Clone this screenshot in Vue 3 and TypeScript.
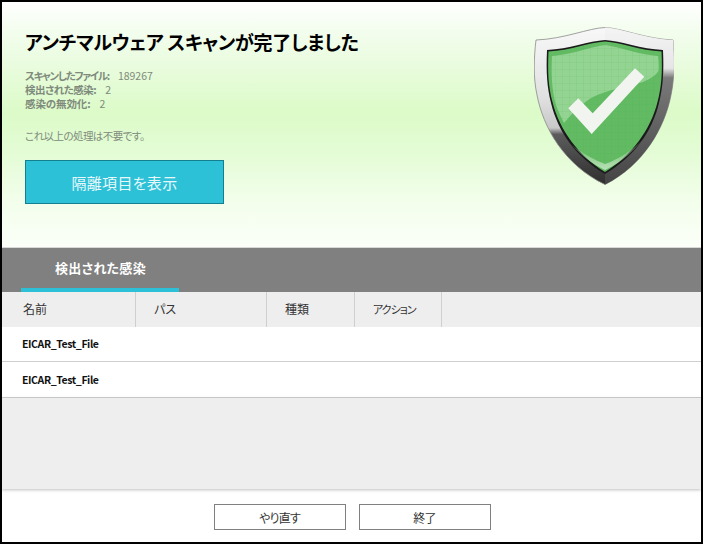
<script setup lang="ts">
const stats = [
  { label: 'スキャンしたファイル:', value: '189267' },
  { label: '検出された感染:', value: '2' },
  { label: '感染の無効化:', value: '2' },
]
const columns = [
  { name: '名前', cls: 'c1' },
  { name: 'パス', cls: 'c2' },
  { name: '種類', cls: 'c3' },
  { name: 'アクション', cls: 'c4' },
]
const rows = ['EICAR_Test_File', 'EICAR_Test_File']
</script>

<template>
  <div class="window">
    <header class="hero">
      <div class="summary">
        <h1 class="title">アンチマルウェア スキャンが完了しました</h1>
        <div class="stats">
          <div v-for="s in stats" :key="s.label" class="stat">
            <span class="stat-label">{{ s.label }}</span>
            <span>{{ s.value }}</span>
          </div>
        </div>
        <p class="note">これ以上の処理は不要です。</p>
        <button class="primary">隔離項目を表示</button>
      </div>
      <svg class="shield" viewBox="0 0 140 158" width="140" height="158">
        <defs>
          <linearGradient id="rim" x1="0" y1="0" x2="0" y2="1">
            <stop offset="0" stop-color="#f8f8f8" />
            <stop offset="0.45" stop-color="#e0e0e0" />
            <stop offset="0.64" stop-color="#c8c8c8" />
            <stop offset="0.68" stop-color="#5c5c5c" />
            <stop offset="1" stop-color="#2e2e2e" />
          </linearGradient>
          <linearGradient id="rimRight" x1="0" y1="0" x2="0" y2="1">
            <stop offset="0" stop-color="#f4f4f4" />
            <stop offset="0.26" stop-color="#e6e6e6" />
            <stop offset="0.32" stop-color="#7a7a7a" />
            <stop offset="1" stop-color="#444" />
          </linearGradient>
          <linearGradient id="lowerGlass" x1="0" y1="0" x2="0" y2="1">
            <stop offset="0" stop-color="#b9e2b6" stop-opacity="0" />
            <stop offset="1" stop-color="#c8e8c8" stop-opacity="0.85" />
          </linearGradient>
          <pattern id="grid" width="7" height="7" patternUnits="userSpaceOnUse">
            <path d="M7 0H0V7" fill="none" stroke="#3f9a4a" stroke-opacity="0.16" stroke-width="1" />
          </pattern>
          <clipPath id="rightHalf"><rect x="71" y="0" width="70" height="158" /></clipPath>
        </defs>
        <path d="M71 0.5C55 1 30 12 2 13C0 30 -1 50 3 68C9 100 30 138 71 157.5C110 138 131 100 137 68C141 50 140 30 139 13C112 12 87 1 71 0.5Z" fill="url(#rim)" stroke="#8a8a8a" stroke-width="0.8" />
        <path d="M71 0.5C87 1 112 12 139 13C140 30 141 50 137 68C131 100 110 138 71 157.5Z" fill="url(#rimRight)" clip-path="url(#rightHalf)" />
        <path d="M71 13C55 14 35 22 13 23C12 45 13 60 17 76C24 105 42 130 71 147C100 130 118 105 125 76C129 60 130 45 129 23C107 22 87 14 71 13Z" fill="#1b1b1b" />
        <path d="M71 14.5C55 15.5 36 23.5 14.5 24.5C13.5 46 14.5 60 18.5 75C25.5 103 44 128 71 145C98 128 116.500 103 123.500 75C127.500 60 128.500 46 127.500 24.500C106 23.500 87 15.500 71 14.500Z" fill="#62bb62" />
        <path d="M71 18C56 20 40 27 18 29C17 48 18 64 22 78C24 84 27 90 30 96C40 84 50 75 59 70C75 62 95 60 109 55C116 52 121 49 124.500 44C125 38 124.500 33 124 29C102 27 86 20 71 18Z" fill="#93d492" />
        <path d="M71 14.5C55 15.5 36 23.5 14.5 24.5C13.5 46 14.5 60 18.5 75C25.5 103 44 128 71 145C98 128 116.500 103 123.500 75C127.500 60 128.500 46 127.500 24.500C106 23.500 87 15.500 71 14.500Z" fill="url(#grid)" />
        <path d="M38 118C47 128 58 137 71 143C88 135 102 122 111 110C100 122 86 132 71 137C60 133 48 126 38 118Z" fill="url(#lowerGlass)" />
        <path d="M34.3 81.3L44.3 71.3L58.7 86.3L101 41.3L110.3 49.7L57.7 107Z" fill="#f1f4ef" />
      </svg>
    </header>

    <div class="tabbar">
      <div class="tab">検出された感染</div>
    </div>

    <div class="table-head">
      <div v-for="c in columns" :key="c.name" class="th" :class="c.cls">{{ c.name }}</div>
    </div>
    <div v-for="(r, i) in rows" :key="i" class="row">{{ r }}</div>
    <div class="empty"></div>

    <footer class="footer">
      <button class="secondary">やり直す</button>
      <button class="secondary">終了</button>
    </footer>
  </div>
</template>

<style>
html, body { margin: 0; background: #fff; }
</style>

<style scoped>
.window {
  width: 703px;
  height: 544px;
  box-sizing: border-box;
  border: 2px solid #000;
  display: flex;
  flex-direction: column;
  font-family: "Noto Sans CJK JP", "Open Sans", sans-serif;
  font-feature-settings: "palt";
  overflow: hidden;
  background: #fff;
}
.hero {
  height: 246px;
  flex: none;
  display: flex;
  justify-content: space-between;
  padding: 25px 27px 0 23px;
  box-sizing: border-box;
  background: linear-gradient(180deg, #ffffff 0%, #f3fdee 12%, #dcfbc8 45%, #e4fcd6 62%, #f3feec 82%, #fbfff8 100%);
  border-bottom: 1px solid #d8d8d8;
}
.title {
  margin: 2px 0 0;
  font-size: 19px;
  line-height: 26px;
  font-weight: 700;
  color: #000;
  letter-spacing: -0.3px;
}
.stats {
  margin-top: 14px;
  font-size: 10.5px;
  line-height: 14px;
  color: #7e8a7c;
}
.stat { display: flex; gap: 9px; }
.stat-label { font-weight: 700; letter-spacing: -0.5px; }
.stat:first-child .stat-label { letter-spacing: -1.3px; }
.stat:nth-child(3) .stat-label { letter-spacing: -0.1px; }
.note {
  margin: 18px 0 0;
  font-size: 10.5px;
  line-height: 14px;
  color: #7e8a7c;
  letter-spacing: -0.55px;
}
.primary {
  display: block;
  margin-top: 17px;
  width: 199px;
  height: 44px;
  padding: 0;
  background: #2dc1d8;
  border: 1px solid #13808f;
  color: #e8f8f8;
  font: inherit;
  font-size: 15px;
  letter-spacing: 0.3px;
}
.shield { flex: none; }
.tabbar {
  height: 44px;
  flex: none;
  background: #808080;
  padding-left: 19px;
  box-sizing: border-box;
}
.tab {
  width: 158px;
  height: 44px;
  box-sizing: border-box;
  border-bottom: 4px solid #2dc1d8;
  padding-left: 34px;
  font-size: 13px;
  line-height: 40px;
  font-weight: 700;
  color: #fff;
  letter-spacing: 0.3px;
}
.table-head {
  height: 35px;
  flex: none;
  display: flex;
  background: #eeeeee;
}
.th {
  box-sizing: border-box;
  border-right: 1px solid #cfcfcf;
  padding-left: 21px;
  font-size: 12px;
  line-height: 34px;
  color: #333;
}
.c1 { width: 134px; }
.c2 { width: 131px; padding-left: 18px; }
.c3 { width: 88px; padding-left: 18px; }
.c4 { width: 87px; padding-left: 18px; font-size: 11px; letter-spacing: -1px; }
.row {
  height: 36px;
  flex: none;
  box-sizing: border-box;
  background: #fff;
  border-bottom: 1px solid #cfcfcf;
  padding-left: 20px;
  font-size: 10.5px;
  line-height: 36px;
  font-weight: 700;
  color: #111;
  letter-spacing: -0.4px;
}
.table-head + .row { height: 35px; line-height: 34px; }
.empty {
  height: 91px;
  flex: none;
  background: #eeeeee;
  box-shadow: 0 1px 3px rgba(0, 0, 0, 0.25);
  position: relative;
}
.footer {
  flex: 1;
  display: flex;
  justify-content: center;
  gap: 13px;
  padding: 15px 0 0 1px;
  box-sizing: border-box;
}
.secondary {
  width: 132px;
  height: 26px;
  padding: 0;
  background: #fff;
  border: 1px solid #808080;
  color: #333;
  font: inherit;
  font-size: 12px;
  letter-spacing: -0.8px;
}
</style>
